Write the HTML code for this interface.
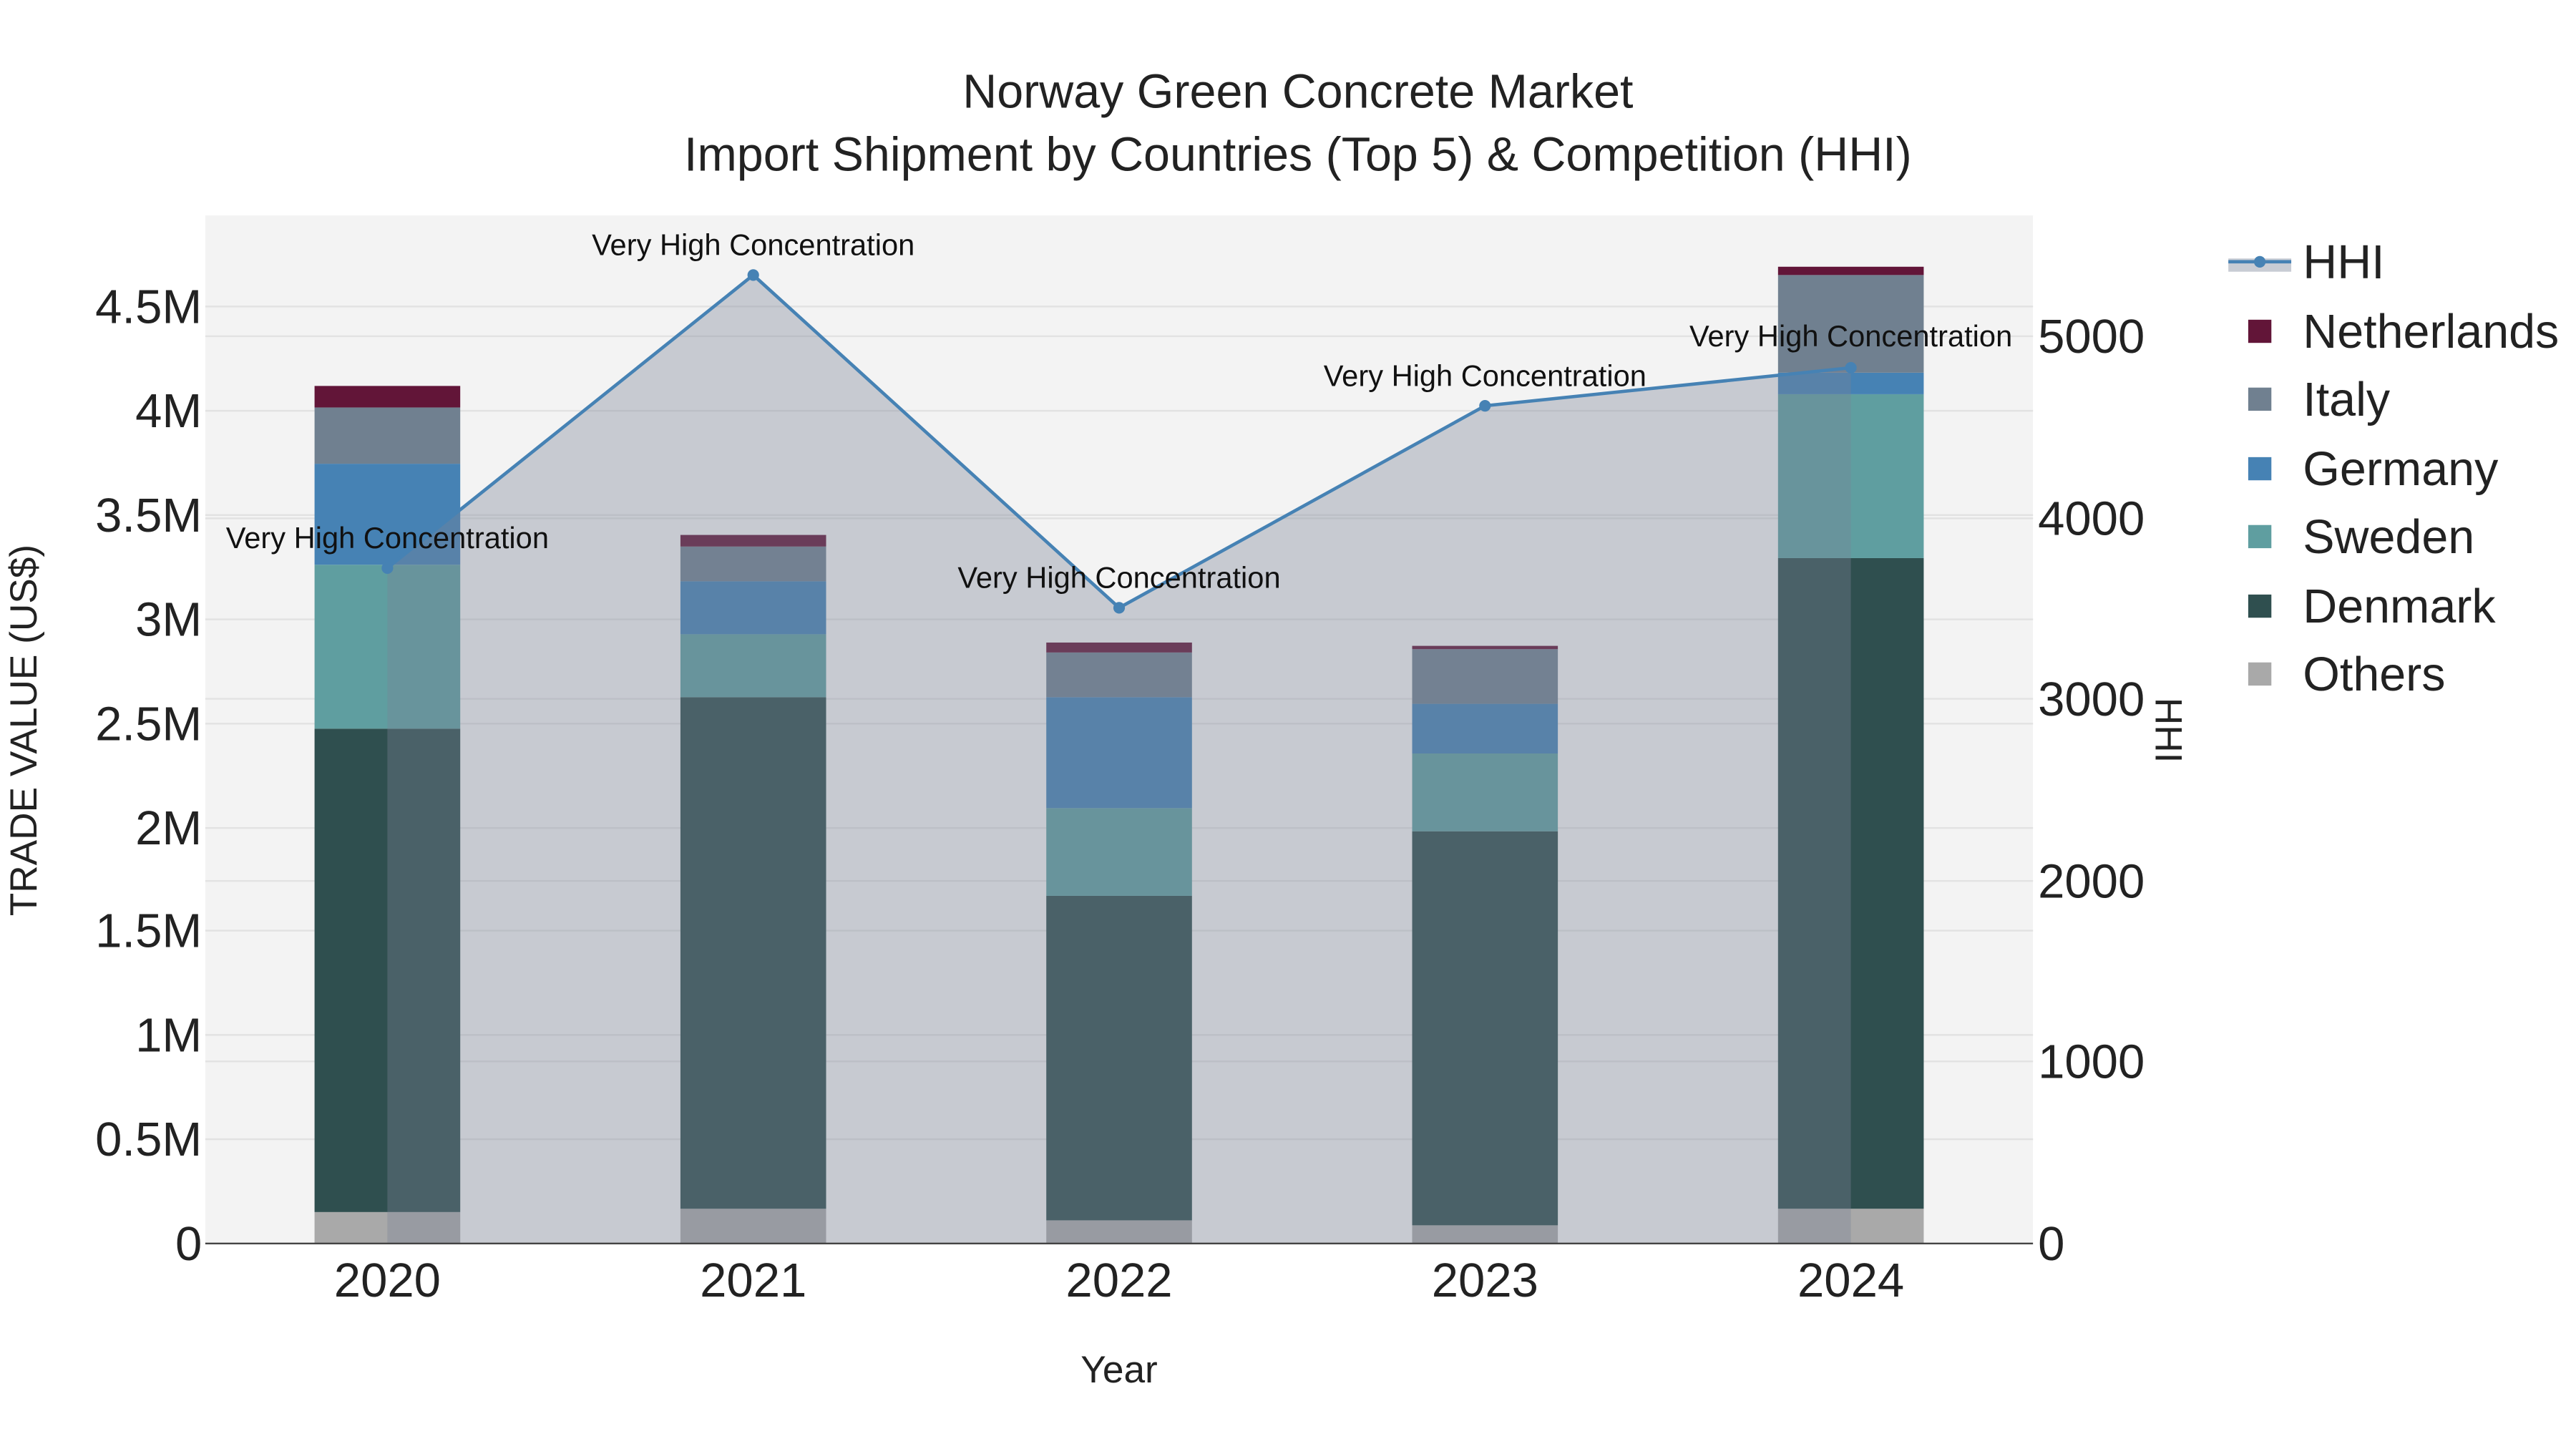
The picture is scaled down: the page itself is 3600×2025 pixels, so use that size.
<!DOCTYPE html>
<html><head><meta charset="utf-8"><style>html,body{margin:0;padding:0;background:#fff}svg{display:block}</style></head>
<body>
<svg width="3600" height="2025" viewBox="0 0 1556 875" xmlns="http://www.w3.org/2000/svg" font-family="Liberation Sans, Arial, sans-serif">
<rect width="1556" height="875" fill="#fff"/>
<rect x="124" y="130" width="1104" height="621" fill="#f3f3f3"/>
<g stroke="#e2e2e2" stroke-width="1">
<line x1="124" x2="1228" y1="688" y2="688"/><line x1="124" x2="1228" y1="625" y2="625"/><line x1="124" x2="1228" y1="562" y2="562"/><line x1="124" x2="1228" y1="500" y2="500"/><line x1="124" x2="1228" y1="437" y2="437"/><line x1="124" x2="1228" y1="374" y2="374"/><line x1="124" x2="1228" y1="311" y2="311"/><line x1="124" x2="1228" y1="248" y2="248"/><line x1="124" x2="1228" y1="185" y2="185"/>
<line x1="124" x2="1228" y1="641" y2="641"/><line x1="124" x2="1228" y1="532" y2="532"/><line x1="124" x2="1228" y1="422" y2="422"/><line x1="124" x2="1228" y1="313" y2="313"/><line x1="124" x2="1228" y1="203" y2="203"/>
</g>
<g>
<rect x="190" y="732" width="88" height="19" fill="#a9a9a9"/><rect x="190" y="440" width="88" height="292" fill="#2f4f4f"/><rect x="190" y="341" width="88" height="99" fill="#5f9ea0"/><rect x="190" y="280" width="88" height="61" fill="#4682b4"/><rect x="190" y="246" width="88" height="34" fill="#708090"/><rect x="190" y="233" width="88" height="13" fill="#621538"/>
<rect x="411" y="730" width="88" height="21" fill="#a9a9a9"/><rect x="411" y="421" width="88" height="309" fill="#2f4f4f"/><rect x="411" y="383" width="88" height="38" fill="#5f9ea0"/><rect x="411" y="351" width="88" height="32" fill="#4682b4"/><rect x="411" y="330" width="88" height="21" fill="#708090"/><rect x="411" y="323" width="88" height="7" fill="#621538"/>
<rect x="632" y="737" width="88" height="14" fill="#a9a9a9"/><rect x="632" y="541" width="88" height="196" fill="#2f4f4f"/><rect x="632" y="488" width="88" height="53" fill="#5f9ea0"/><rect x="632" y="421" width="88" height="67" fill="#4682b4"/><rect x="632" y="394" width="88" height="27" fill="#708090"/><rect x="632" y="388" width="88" height="6" fill="#621538"/>
<rect x="853" y="740" width="88" height="11" fill="#a9a9a9"/><rect x="853" y="502" width="88" height="238" fill="#2f4f4f"/><rect x="853" y="455" width="88" height="47" fill="#5f9ea0"/><rect x="853" y="425" width="88" height="30" fill="#4682b4"/><rect x="853" y="392" width="88" height="33" fill="#708090"/><rect x="853" y="390" width="88" height="2" fill="#621538"/>
<rect x="1074" y="730" width="88" height="21" fill="#a9a9a9"/><rect x="1074" y="337" width="88" height="393" fill="#2f4f4f"/><rect x="1074" y="238" width="88" height="99" fill="#5f9ea0"/><rect x="1074" y="225" width="88" height="13" fill="#4682b4"/><rect x="1074" y="166" width="88" height="59" fill="#708090"/><rect x="1074" y="161" width="88" height="5" fill="#621538"/>
</g>
<polygon points="234,751 234,343 455,166 676,367 897,245 1118,222 1118,751" fill="rgb(123,131,151)" fill-opacity="0.36"/>
<polyline points="234,343 455,166 676,367 897,245 1118,222" fill="none" stroke="#4682b4" stroke-width="2"/>
<g fill="#4682b4"><circle cx="234" cy="343" r="3.5"/><circle cx="455" cy="166" r="3.5"/><circle cx="676" cy="367" r="3.5"/><circle cx="897" cy="245" r="3.5"/><circle cx="1118" cy="222" r="3.5"/></g>
<line x1="124" x2="1228" y1="751" y2="751" stroke="#444" stroke-width="1"/>
<g font-size="18" fill="#111" text-anchor="middle">
<text x="234" y="331">Very High Concentration</text><text x="455" y="154">Very High Concentration</text><text x="676" y="355">Very High Concentration</text><text x="897" y="233">Very High Concentration</text><text x="1118" y="209">Very High Concentration</text>
</g>
<g font-size="29" fill="#222" text-anchor="end">
<text x="122" y="761">0</text><text x="122" y="698">0.5M</text><text x="122" y="635">1M</text><text x="122" y="572">1.5M</text><text x="122" y="510">2M</text><text x="122" y="447">2.5M</text><text x="122" y="384">3M</text><text x="122" y="321">3.5M</text><text x="122" y="258">4M</text><text x="122" y="195">4.5M</text>
</g>
<g font-size="29" fill="#222">
<text x="1231" y="761">0</text><text x="1231" y="651">1000</text><text x="1231" y="542">2000</text><text x="1231" y="432">3000</text><text x="1231" y="323">4000</text><text x="1231" y="213">5000</text>
</g>
<g font-size="29" fill="#222" text-anchor="middle">
<text x="234" y="783">2020</text><text x="455" y="783">2021</text><text x="676" y="783">2022</text><text x="897" y="783">2023</text><text x="1118" y="783">2024</text>
</g>
<g font-size="28.7" fill="#222" text-anchor="middle">
<text x="784" y="65">Norway Green Concrete Market</text>
<text x="784" y="103">Import Shipment by Countries (Top 5) &amp; Competition (HHI)</text>
</g>
<text x="676" y="835" font-size="23" fill="#222" text-anchor="middle">Year</text>
<text transform="translate(22,441) rotate(-90)" font-size="23" fill="#222" text-anchor="middle">TRADE VALUE (US$)</text>
<text transform="translate(1302,441) rotate(90)" font-size="23" fill="#222" text-anchor="middle">HHI</text>
<rect x="1346" y="156" width="38" height="8" fill="#c8ccd4"/>
<line x1="1346" x2="1384" y1="158" y2="158" stroke="#4682b4" stroke-width="2"/><circle cx="1365" cy="158" r="3.5" fill="#4682b4"/>
<rect x="1358" y="193" width="14" height="14" fill="#621538"/>
<rect x="1358" y="234" width="14" height="14" fill="#708090"/>
<rect x="1358" y="276" width="14" height="14" fill="#4682b4"/>
<rect x="1358" y="317" width="14" height="14" fill="#5f9ea0"/>
<rect x="1358" y="359" width="14" height="14" fill="#2f4f4f"/>
<rect x="1358" y="400" width="14" height="14" fill="#a9a9a9"/>
<g font-size="28.7" fill="#222">
<text x="1391" y="168">HHI</text><text x="1391" y="210">Netherlands</text><text x="1391" y="251">Italy</text><text x="1391" y="293">Germany</text><text x="1391" y="334">Sweden</text><text x="1391" y="376">Denmark</text><text x="1391" y="417">Others</text>
</g>
</svg>
</body></html>
